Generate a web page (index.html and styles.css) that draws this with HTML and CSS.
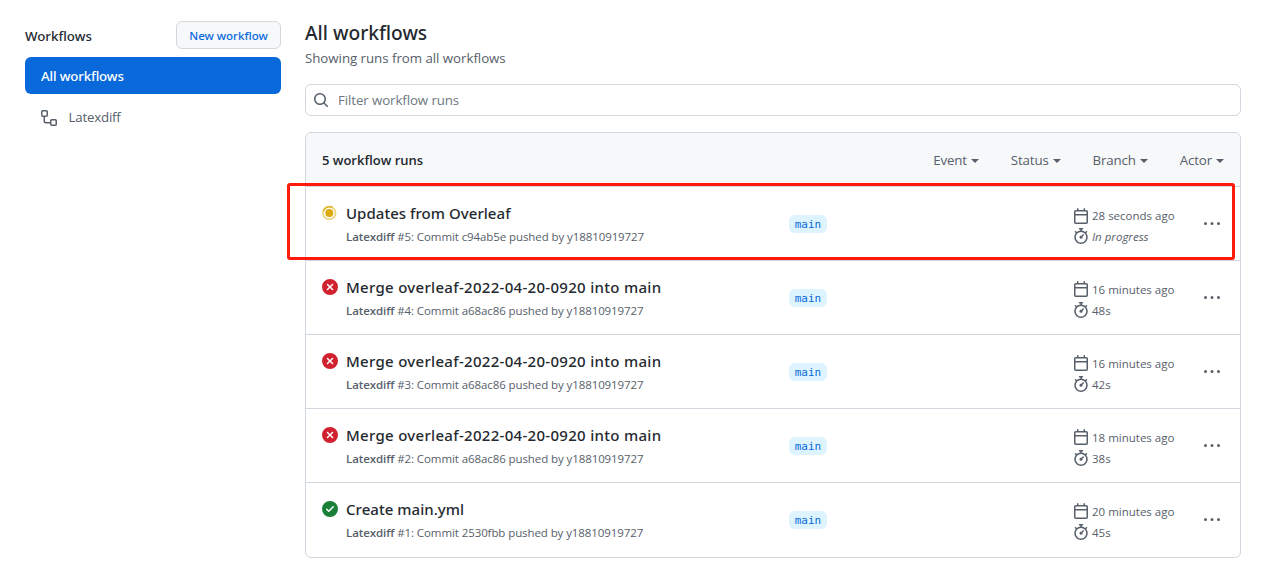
FILE: index.html
```html
<!DOCTYPE html>
<html lang="en">
<head>
<meta charset="UTF-8">
<meta name="viewport" content="width=device-width, initial-scale=1.0">
<title>Workflow runs</title>
<link rel="stylesheet" href="styles.css">
</head>
<body>
<svg class="sprite" xmlns="http://www.w3.org/2000/svg">
  <symbol id="calendar" viewBox="0 0 16 16">
    <path fill-rule="evenodd" d="M4.75 0a.75.75 0 01.75.75V2h5V.75a.75.75 0 011.5 0V2h1.25c.966 0 1.75.784 1.75 1.75v10.5A1.75 1.75 0 0113.25 16H2.75A1.75 1.75 0 011 14.25V3.75C1 2.784 1.784 2 2.75 2H4V.75A.75.75 0 014.75 0zm0 3.5h8.5a.25.25 0 01.25.25V6h-11V3.75a.25.25 0 01.25-.25h2zm-2.25 4v6.75c0 .138.112.25.25.25h10.500a.25.25 0 00.25-.25V7.500h-11z"/>
  </symbol>
  <symbol id="stopwatch" viewBox="0 0 16 16">
    <path fill-rule="evenodd" d="M5.750.75A.75.75 0 016.500 0h3a.75.75 0 010 1.500h-.75v1l-.001.041a6.718 6.718 0 013.464 1.435l.007-.006.750-.750a.750.750 0 111.060 1.060l-.750.750-.006.007a6.750 6.750 0 11-10.548 0L2.720 5.030l-.750-.750a.750.750 0 011.060-1.060l.750.750.007.006A6.718 6.718 0 017.250 2.541a.756.756 0 010-.041v-1H6.500a.750.750 0 01-.750-.750zM8 14.500A5.250 5.250 0 108 4a5.250 5.250 0 000 10.500zm.389-6.700l1.330-1.330a.750.750 0 111.061 1.060L9.450 8.861A1.502 1.502 0 018 10.750a1.500 1.500 0 11.389-2.950z"/>
  </symbol>
  <symbol id="failed" viewBox="0 0 16 16">
    <path fill-rule="evenodd" d="M2.343 13.657A8 8 0 1113.657 2.343 8 8 0 012.343 13.657zM6.030 4.970a.750.750 0 00-1.060 1.060L6.940 8 4.970 9.970a.750.750 0 101.060 1.060L8 9.060l1.970 1.970a.750.750 0 101.060-1.060L9.060 8l1.970-1.970a.750.750 0 10-1.060-1.060L8 6.940 6.030 4.970z"/>
  </symbol>
  <symbol id="success" viewBox="0 0 16 16">
    <path fill-rule="evenodd" d="M8 16A8 8 0 108 0a8 8 0 000 16zm3.780-9.720a.750.750 0 00-1.060-1.060L6.750 9.190 5.280 7.720a.750.750 0 00-1.060 1.060l2 2a.750.750 0 001.060 0l4.500-4.500z"/>
  </symbol>
  <symbol id="kebab" viewBox="0 0 16 16">
    <path d="M8 9a1.500 1.500 0 100-3 1.500 1.500 0 000 3zM1.500 9a1.500 1.500 0 100-3 1.500 1.500 0 000 3zm13 0a1.500 1.500 0 100-3 1.500 1.500 0 000 3z"/>
  </symbol>
</svg>

<div class="layout">
  <aside class="sidebar">
    <div class="sidebar-head">
      <h2>Workflows</h2>
      <button class="btn">New workflow</button>
    </div>
    <a class="nav-item selected">All workflows</a>
    <a class="nav-item">
      <svg class="icon" width="16" height="16" viewBox="0 0 16 16"><path fill-rule="evenodd" d="M0 1.750C0 .784.784 0 1.750 0h3.500C6.216 0 7 .784 7 1.750v3.500A1.750 1.750 0 015.250 7H4v4a1 1 0 001 1h4v-1.250C9 9.784 9.784 9 10.750 9h3.500c.966 0 1.750.784 1.750 1.750v3.500A1.750 1.750 0 0114.250 16h-3.500A1.750 1.750 0 019 14.250v-.750H5A2.500 2.500 0 012.500 11V7h-.750A1.750 1.750 0 010 5.250v-3.500zm1.750-.250a.250.250 0 00-.250.250v3.500c0 .138.112.250.250.250h3.500a.250.250 0 00.250-.250v-3.500a.250.250 0 00-.250-.250h-3.500zm9 9a.250.250 0 00-.250.250v3.500c0 .138.112.250.250.250h3.500a.250.250 0 00.250-.250v-3.500a.250.250 0 00-.250-.250h-3.500z"/></svg>
      <span>Latexdiff</span>
    </a>
  </aside>

  <main class="content">
    <h1>All workflows</h1>
    <p class="subtitle">Showing runs from all workflows</p>
    <div class="search">
      <svg class="icon" width="16" height="16" viewBox="0 0 16 16"><path fill-rule="evenodd" d="M11.500 7a4.499 4.499 0 11-8.998 0A4.499 4.499 0 0111.500 7zm-.820 4.740a6 6 0 111.060-1.060l3.040 3.040a.750.750 0 11-1.060 1.060l-3.040-3.040z"/></svg>
      <span>Filter workflow runs</span>
    </div>

    <div class="runs">
      <div class="runs-head">
        <strong>5 workflow runs</strong>
        <div class="filters">
          <span class="filter">Event<i class="caret"></i></span>
          <span class="filter">Status<i class="caret"></i></span>
          <span class="filter">Branch<i class="caret"></i></span>
          <span class="filter">Actor<i class="caret"></i></span>
        </div>
      </div>

      <div class="run current">
        <svg class="state" width="16" height="16" viewBox="0 0 16 16">
          <circle cx="7.300" cy="8" r="6.300" fill="none" stroke="#dbab0a" stroke-opacity=".5" stroke-width="1.800"/>
          <path d="M1.300 6A6.300 6.300 0 0110.500 2.600" fill="none" stroke="#dbab0a" stroke-opacity=".7" stroke-width="1.800"/>
          <circle cx="7.300" cy="8" r="4" fill="#dbab0a"/>
        </svg>
        <div class="info">
          <div class="title">Updates from Overleaf</div>
          <div class="detail"><b>Latexdiff</b> #5: Commit c94ab5e pushed by y18810919727</div>
        </div>
        <div class="ref"><span class="label">main</span></div>
        <div class="meta">
          <div><svg class="icon"><use href="#calendar"/></svg><span>28 seconds ago</span></div>
          <div><svg class="icon"><use href="#stopwatch"/></svg><em>In progress</em></div>
        </div>
        <svg class="icon kebab"><use href="#kebab"/></svg>
      </div>

      <div class="run">
        <svg class="state failed"><use href="#failed"/></svg>
        <div class="info">
          <div class="title merge">Merge overleaf-2022-04-20-0920 into main</div>
          <div class="detail"><b>Latexdiff</b> #4: Commit a68ac86 pushed by y18810919727</div>
        </div>
        <div class="ref"><span class="label">main</span></div>
        <div class="meta">
          <div><svg class="icon"><use href="#calendar"/></svg><span>16 minutes ago</span></div>
          <div><svg class="icon"><use href="#stopwatch"/></svg><span>48s</span></div>
        </div>
        <svg class="icon kebab"><use href="#kebab"/></svg>
      </div>

      <div class="run">
        <svg class="state failed"><use href="#failed"/></svg>
        <div class="info">
          <div class="title merge">Merge overleaf-2022-04-20-0920 into main</div>
          <div class="detail"><b>Latexdiff</b> #3: Commit a68ac86 pushed by y18810919727</div>
        </div>
        <div class="ref"><span class="label">main</span></div>
        <div class="meta">
          <div><svg class="icon"><use href="#calendar"/></svg><span>16 minutes ago</span></div>
          <div><svg class="icon"><use href="#stopwatch"/></svg><span>42s</span></div>
        </div>
        <svg class="icon kebab"><use href="#kebab"/></svg>
      </div>

      <div class="run">
        <svg class="state failed"><use href="#failed"/></svg>
        <div class="info">
          <div class="title merge">Merge overleaf-2022-04-20-0920 into main</div>
          <div class="detail"><b>Latexdiff</b> #2: Commit a68ac86 pushed by y18810919727</div>
        </div>
        <div class="ref"><span class="label">main</span></div>
        <div class="meta">
          <div><svg class="icon"><use href="#calendar"/></svg><span>18 minutes ago</span></div>
          <div><svg class="icon"><use href="#stopwatch"/></svg><span>38s</span></div>
        </div>
        <svg class="icon kebab"><use href="#kebab"/></svg>
      </div>

      <div class="run">
        <svg class="state success"><use href="#success"/></svg>
        <div class="info">
          <div class="title">Create main.yml</div>
          <div class="detail"><b>Latexdiff</b> #1: Commit 2530fbb pushed by y18810919727</div>
        </div>
        <div class="ref"><span class="label">main</span></div>
        <div class="meta">
          <div><svg class="icon"><use href="#calendar"/></svg><span>20 minutes ago</span></div>
          <div><svg class="icon"><use href="#stopwatch"/></svg><span>45s</span></div>
        </div>
        <svg class="icon kebab"><use href="#kebab"/></svg>
      </div>
    </div>
  </main>
</div>
</body>
</html>
```
FILE: styles.css
```css
*, *::after {
  box-sizing: border-box;
}

body {
  margin: 0;
  background: #fff;
  color: #24292f;
  font-family: "Open Sans", "Noto Sans", sans-serif;
  font-size: 13.3px;
  line-height: 20px;
}

h1, h2, p {
  margin: 0;
}

.sprite {
  display: none;
}

.icon {
  width: 16px;
  height: 16px;
  flex: none;
  fill: #57606a;
}

.layout {
  display: flex;
  gap: 24px;
  padding: 21px 34px 0 25px;
}

.sidebar {
  width: 256px;
  flex: none;
}

.sidebar-head {
  display: flex;
  align-items: center;
  justify-content: space-between;
  height: 28px;
  margin-bottom: 8px;
}

/* medium weight text */
h1, h2, .btn, .title, .nav-item.selected {
  font-family: "Noto Sans", sans-serif;
  font-weight: 500;
}

h2 {
  font-size: 13.3px;
  padding-top: 2px;
}

.btn {
  width: 105px;
  height: 28px;
  padding: 0;
  border: 1px solid #d5d8db;
  border-radius: 6px;
  background: #f6f8fa;
  color: #0969da;
  font-size: 11.5px;
  white-space: nowrap;
}

.nav-item {
  display: flex;
  align-items: center;
  gap: 12px;
  height: 37px;
  padding: 0 16px;
  margin-bottom: 5px;
  border-radius: 6px;
  color: #57606a;
}

.nav-item span {
  margin-bottom: 2px;
  margin-left: -0.5px;
  letter-spacing: -0.2px;
}

.nav-item.selected {
  background: #0969da;
  color: #fff;
  letter-spacing: -0.15px;
}

.content {
  flex: 1;
}

h1 {
  font-size: 19.2px;
  line-height: 24px;
}

.subtitle {
  margin: 3px 0 16px;
  color: #57606a;
  letter-spacing: -0.04px;
}

.search {
  display: flex;
  align-items: center;
  gap: 9px;
  height: 32px;
  padding: 0 7px;
  margin-bottom: 16px;
  border: 1px solid #d0d7de;
  border-radius: 6px;
  color: #6e7781;
  letter-spacing: -0.1px;
}

.runs {
  border: 1px solid #d0d7de;
  border-radius: 6px;
}

.runs-head {
  display: flex;
  align-items: center;
  justify-content: space-between;
  height: 53px;
  padding: 0 16px;
  background: #f6f8fa;
  border-radius: 6px 6px 0 0;
}

.runs-head strong {
  font-weight: 600;
  font-size: 13px;
}

.filters {
  display: flex;
  gap: 32px;
  color: #57606a;
  letter-spacing: -0.15px;
}

.filter {
  display: flex;
  align-items: center;
}

.caret {
  margin: 3px 0 0 4px;
  border: 4px solid transparent;
  border-top-color: #57606a;
  border-bottom: 0;
}

.run {
  display: flex;
  height: 74px;
  padding: 0 20px 0 16px;
  border-top: 1px solid #d0d7de;
}

.run:last-child {
  height: 75px;
}

.state {
  width: 16px;
  height: 16px;
  flex: none;
  margin: 18px 8px 0 0;
}

.failed {
  fill: #cf222e;
}

.success {
  fill: #1a7f37;
}

.info {
  width: 443px;
  padding-top: 14px;
  white-space: nowrap;
}

.title {
  font-size: 15px;
  line-height: 24px;
  letter-spacing: 0.04px;
}

.title.merge {
  letter-spacing: 0.3px;
}

.detail {
  margin-top: 2px;
  color: #57606a;
  font-size: 11.5px;
  letter-spacing: -0.09px;
}

.detail b {
  font-weight: 600;
}

.ref {
  flex: 1;
  padding-top: 28px;
}

.label {
  display: block;
  width: 38px;
  height: 18px;
  border-radius: 6px;
  background: #ddf4ff;
  color: #0969da;
  font: 11px/19px "DejaVu Sans Mono", monospace;
  text-align: center;
}

.meta {
  width: 131px;
  padding-top: 18px;
  color: #57606a;
  font-size: 11.5px;
}

.meta div {
  display: flex;
  align-items: center;
  gap: 3px;
  height: 20px;
}

.meta div + div {
  height: 21px;
}

.meta span,
.meta em {
  padding-top: 2px;
}

.current .meta div:first-child .icon {
  margin-top: 1px;
}

.kebab {
  margin-top: 29px;
}

/* red frame around the run in progress */
.current {
  position: relative;
}

.current::after {
  content: "";
  position: absolute;
  top: -4px;
  left: -19px;
  width: 948px;
  height: 77px;
  border: 3px solid #ff1a0d;
  border-radius: 3px;
}
```
